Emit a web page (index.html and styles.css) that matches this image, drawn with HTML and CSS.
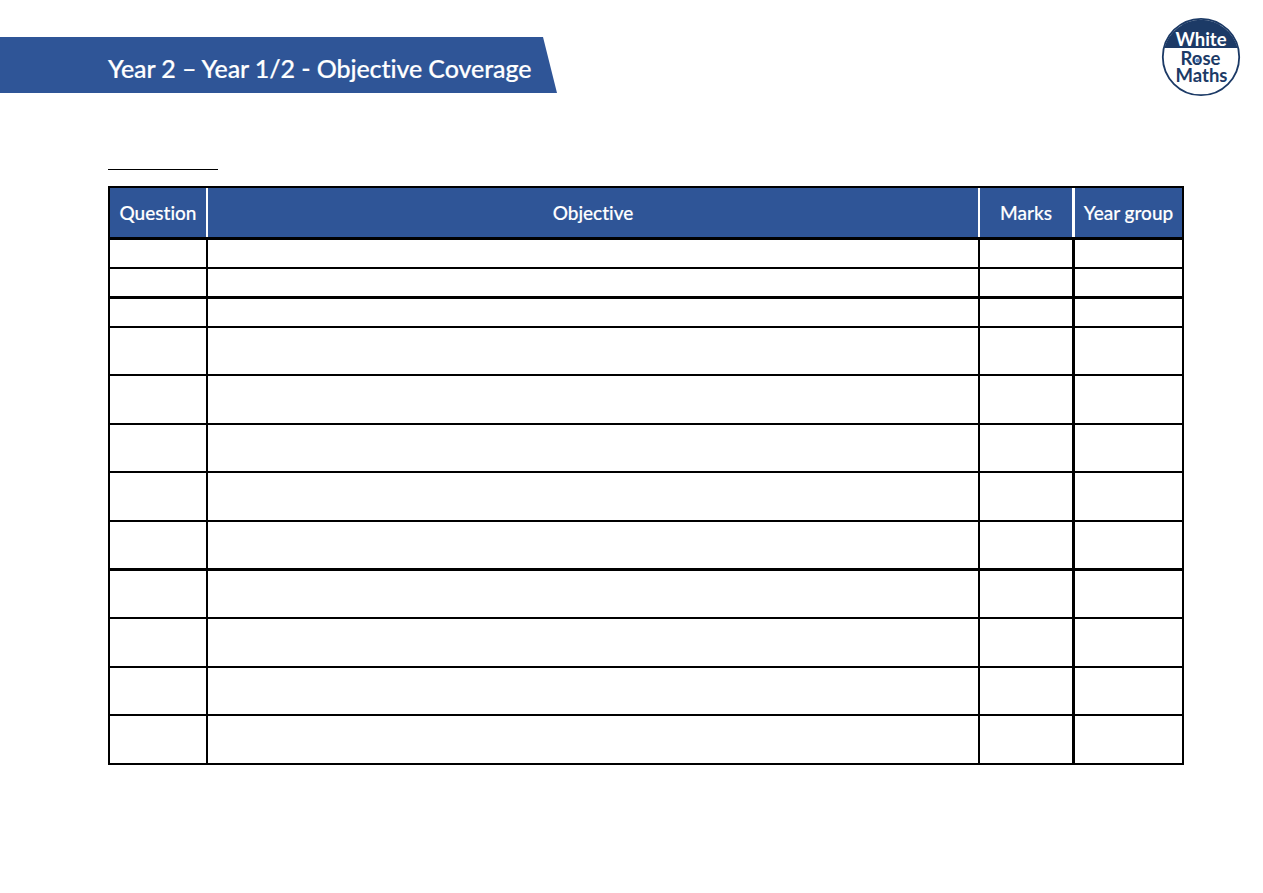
FILE: index.html
```html
<!DOCTYPE html>
<html lang="en">
<head>
<meta charset="utf-8">
<title>Year 2 - Objective Coverage</title>
<link rel="stylesheet" href="styles.css">
</head>
<body>
<header class="top">
  <div class="banner"><h1 class="banner-title">Year 2 – Year 1/2 - Objective Coverage</h1></div>
  <svg class="logo" width="80" height="80" viewBox="0 0 80 80" role="img" aria-label="White Rose Maths">
    <circle cx="40" cy="40" r="38.2" fill="#fff" stroke="#1c3a66" stroke-width="1.8"/>
    <path d="M3.3 31 A38 38 0 0 1 76.7 31 Z" fill="#1c3a66"/>
    <text class="logo-word logo-white" x="40" y="28.5">White</text>
    <text class="logo-word logo-navy" x="39.5" y="48">Rose</text>
    <text class="logo-word logo-navy" x="40.5" y="65">Maths</text>
    <circle class="logo-rose" cx="36.6" cy="43.5" r="2.1"/>
  </svg>
</header>
<div class="rule"></div>
<div class="sheet">
  <div class="row head">
    <div class="cell">Question</div><div class="cell">Objective</div><div class="cell">Marks</div><div class="cell">Year group</div>
  </div>
  <div class="row h29"><div class="cell"></div><div class="cell"></div><div class="cell"></div><div class="cell"></div></div>
  <div class="row h30 thick"><div class="cell"></div><div class="cell"></div><div class="cell"></div><div class="cell"></div></div>
  <div class="row h29"><div class="cell"></div><div class="cell"></div><div class="cell"></div><div class="cell"></div></div>
  <div class="row h48"><div class="cell"></div><div class="cell"></div><div class="cell"></div><div class="cell"></div></div>
  <div class="row h49"><div class="cell"></div><div class="cell"></div><div class="cell"></div><div class="cell"></div></div>
  <div class="row h48"><div class="cell"></div><div class="cell"></div><div class="cell"></div><div class="cell"></div></div>
  <div class="row h49"><div class="cell"></div><div class="cell"></div><div class="cell"></div><div class="cell"></div></div>
  <div class="row h49 thick"><div class="cell"></div><div class="cell"></div><div class="cell"></div><div class="cell"></div></div>
  <div class="row h48"><div class="cell"></div><div class="cell"></div><div class="cell"></div><div class="cell"></div></div>
  <div class="row h49"><div class="cell"></div><div class="cell"></div><div class="cell"></div><div class="cell"></div></div>
  <div class="row h48"><div class="cell"></div><div class="cell"></div><div class="cell"></div><div class="cell"></div></div>
  <div class="row h47"><div class="cell"></div><div class="cell"></div><div class="cell"></div><div class="cell"></div></div>
</div>
</body>
</html>
```
FILE: styles.css
```css
* { box-sizing: border-box; }
html, body { margin: 0; padding: 0; background: #fff; }
body { font-family: "Lato", "Noto Sans", sans-serif; font-variant-ligatures: none; }

.top {
  display: flex;
  justify-content: space-between;
  align-items: flex-start;
  height: 169px;
  padding: 17px 22px 0 0;
}
.banner {
  width: 557px;
  height: 56px;
  margin-top: 20px;
  padding: 6px 0 0 108px;
  display: flex;
  align-items: center;
  background: #2f5597;
  clip-path: polygon(0 0, 543px 0, 100% 100%, 0 100%);
}
.banner-title {
  margin: 0;
  color: #fff;
  font-size: 25px;
  font-weight: 500;
  letter-spacing: -0.08px;
  -webkit-text-stroke: 0.2px #fff;
  white-space: nowrap;
}
.logo { display: block; }
.logo-word { font-family: "Lato", sans-serif; font-size: 18.5px; font-weight: 700; text-anchor: middle; }
.logo-white { fill: #fff; }
.logo-navy { fill: #1c3a66; }
.logo-rose { fill: #5f86bd; }

.rule {
  width: 110px;
  height: 1px;
  margin-left: 108px;
  background: #000;
}
.sheet {
  width: 1076px;
  margin: 16px 0 0 108px;
  border: 2px solid #000;
}
.row {
  display: grid;
  grid-template-columns: 98px 772px 95px 107px;
  border-bottom: 2px solid #000;
}
.row:last-child { border-bottom: 0; }
.row.thick { border-bottom-width: 3px; }
.h29 { height: 29px; }
.h30 { height: 30px; }
.h47 { height: 47px; }
.h48 { height: 48px; }
.h49 { height: 49px; }
.cell { border-right: 2px solid #000; }
.cell:nth-child(3) { border-right-width: 3px; }
.cell:last-child { border-right: 0; }

.head {
  height: 52px;
  border-bottom-width: 3px;
  background: #2f5597;
}
.head .cell {
  display: flex;
  align-items: center;
  justify-content: center;
  border-right-color: #fff;
  color: #fff;
  font-size: 19px;
  font-weight: 500;
  -webkit-text-stroke: 0.15px #fff;
  white-space: nowrap;
}
```
